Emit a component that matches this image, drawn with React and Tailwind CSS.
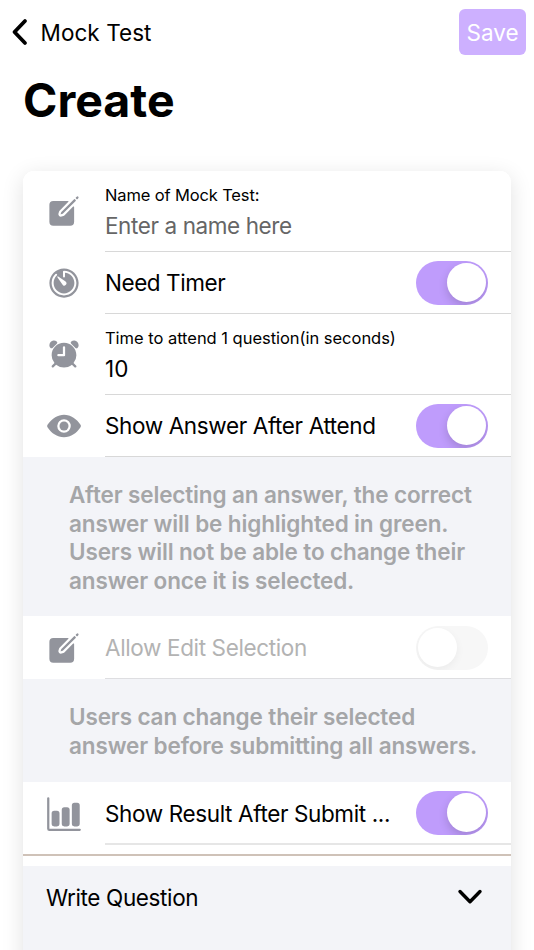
import { useState } from "react";
import { clsx } from "clsx";
import { IoAlarm, IoBarChart, IoCreate, IoEye, IoTimer } from "react-icons/io5";

function Toggle({ checked, disabled, onChange, label }) {
  return (
    <button
      type="button"
      role="switch"
      aria-checked={checked}
      aria-label={label}
      disabled={disabled}
      onClick={() => onChange(!checked)}
      className={clsx(
        "mr-[23px] flex h-11 w-[72.5px] shrink-0 items-center overflow-hidden rounded-full px-[2.5px] pb-px",
        checked ? "justify-end bg-[#bf9cfc]" : "justify-start bg-[#f7f7f7]"
      )}
    >
      <span
        className={clsx(
          "size-[39px] rounded-full bg-white",
          checked
            ? "shadow-[0_4px_10px_rgba(0,0,0,0.16)]"
            : "shadow-[0_3px_8px_rgba(0,0,0,0.05)]"
        )}
      />
    </button>
  );
}

function Item({ icon: Icon, className, contentClass, children }) {
  return (
    <div className={clsx("flex items-stretch bg-white pl-[23px]", className)}>
      <div className="flex w-[59px] shrink-0 items-center">
        <Icon className="size-[36px] text-[#92949c]" />
      </div>
      <div
        className={clsx(
          "flex min-w-0 flex-1 items-center justify-between",
          contentClass || "border-b border-[#d8d8d8] pt-[2px]"
        )}
      >
        {children}
      </div>
    </div>
  );
}

function Field({ label, labelClass, inputClass, ...props }) {
  return (
    <label className="flex w-full flex-col pt-[2px]">
      <span className={clsx("text-[16.5px] leading-5", labelClass)}>{label}</span>
      <input
        {...props}
        className={clsx(
          "mt-[7px] h-7 w-full bg-transparent text-[22.5px] outline-none placeholder:text-[#666666]",
          inputClass
        )}
      />
    </label>
  );
}

function Note({ className, children }) {
  return (
    <p
      className={clsx(
        "bg-[#f3f4f8] pr-5 pl-[46px] text-[22.5px] leading-[28.5px] font-semibold tracking-[-0.13px] text-[#a5a6a8]",
        className
      )}
    >
      {children}
    </p>
  );
}

export default function App() {
  const [name, setName] = useState("");
  const [seconds, setSeconds] = useState("10");
  const [needTimer, setNeedTimer] = useState(true);
  const [showAnswer, setShowAnswer] = useState(true);
  const [allowEdit, setAllowEdit] = useState(false);
  const [showResult, setShowResult] = useState(true);

  return (
    <main className="h-[950px] w-full overflow-hidden bg-white font-['Inter',sans-serif] text-[22.5px] tracking-[-0.37px] text-black">
      <header className="flex h-16 items-center justify-between pr-2 pl-[11px]">
        <button type="button" className="flex items-center gap-[12.5px]">
          <svg
            width="17"
            height="28"
            viewBox="0 0 17 28"
            fill="none"
            stroke="currentColor"
            strokeWidth="3.8"
            strokeLinecap="round"
            strokeLinejoin="round"
          >
            <path d="M14 3 3.5 14 14 25" />
          </svg>
          <span className="pt-px tracking-[0.06px]">Mock Test</span>
        </button>
        <button
          type="button"
          className="flex h-[46px] w-[67px] items-center justify-center rounded-[6px] bg-[#cdb0ff] pt-px tracking-normal text-white"
        >
          Save
        </button>
      </header>

      <h1 className="mt-[7px] pl-[23px] text-[46.5px] leading-[58px] font-bold tracking-normal">
        Create
      </h1>

      <section className="mt-[42px] mr-[23px] ml-[23px] h-[850px] overflow-hidden rounded-[11px] bg-white shadow-[0_5px_22px_rgba(0,0,0,0.12)]">
        <Item icon={IoCreate} className="h-[80.5px]">
          <Field
            label="Name of Mock Test:"
            labelClass="tracking-[-0.14px]"
            inputClass="tracking-[-0.4px]"
            placeholder="Enter a name here"
            value={name}
            onChange={(e) => setName(e.target.value)}
          />
        </Item>
        <Item icon={IoTimer} className="h-[62.5px]">
          <span className="tracking-[-0.44px]">Need Timer</span>
          <Toggle label="Need Timer" checked={needTimer} onChange={setNeedTimer} />
        </Item>
        <Item icon={IoAlarm} className="h-[80.5px]">
          <Field
            label="Time to attend 1 question(in seconds)"
            labelClass="tracking-[-0.03px]"
            inputClass="tracking-normal"
            inputMode="numeric"
            value={seconds}
            onChange={(e) => setSeconds(e.target.value)}
          />
        </Item>
        <Item icon={IoEye} className="h-[62.5px]">
          <span>Show Answer After Attend</span>
          <Toggle
            label="Show Answer After Attend"
            checked={showAnswer}
            onChange={setShowAnswer}
          />
        </Item>
        <Note className="h-[159px] pt-[24px]">
          After selecting an answer, the correct
          <br />
          answer will be highlighted in green.
          <br />
          Users will not be able to change their
          <br />
          answer once it is selected.
        </Note>
        <Item
          icon={IoCreate}
          className="h-[63px]"
          contentClass="border-b border-[#dedee1] pt-[2px]"
        >
          <span className="text-[#b3b3b3]">Allow Edit Selection</span>
          <Toggle
            label="Allow Edit Selection"
            checked={allowEdit}
            disabled
            onChange={setAllowEdit}
          />
        </Item>
        <Note className="h-[103px] pt-[24px]">
          Users can change their selected
          <br />
          answer before submitting all answers.
        </Note>
        <Item
          icon={IoBarChart}
          className="h-[63px]"
          contentClass="border-b-2 border-[#e6e6e6]"
        >
          <span className="pt-[2px]">Show Result After Submit ...</span>
          <Toggle
            label="Show Result After Submit"
            checked={showResult}
            onChange={setShowResult}
          />
        </Item>
        <div className="mt-[9px] h-[2px] bg-[#cfc2b8]" />
        <button
          type="button"
          className="mt-[10px] flex h-[100px] w-full items-start justify-between bg-[#f3f4f8] pt-[18px] pr-[28px] pl-[23px]"
        >
          <span className="leading-7">Write Question</span>
          <svg
            width="26"
            height="28"
            viewBox="0 0 26 28"
            fill="none"
            stroke="currentColor"
            strokeWidth="3.4"
            strokeLinecap="round"
            strokeLinejoin="round"
          >
            <path d="m3 7.5 10 10.2 10-10.2" />
          </svg>
        </button>
      </section>
    </main>
  );
}
